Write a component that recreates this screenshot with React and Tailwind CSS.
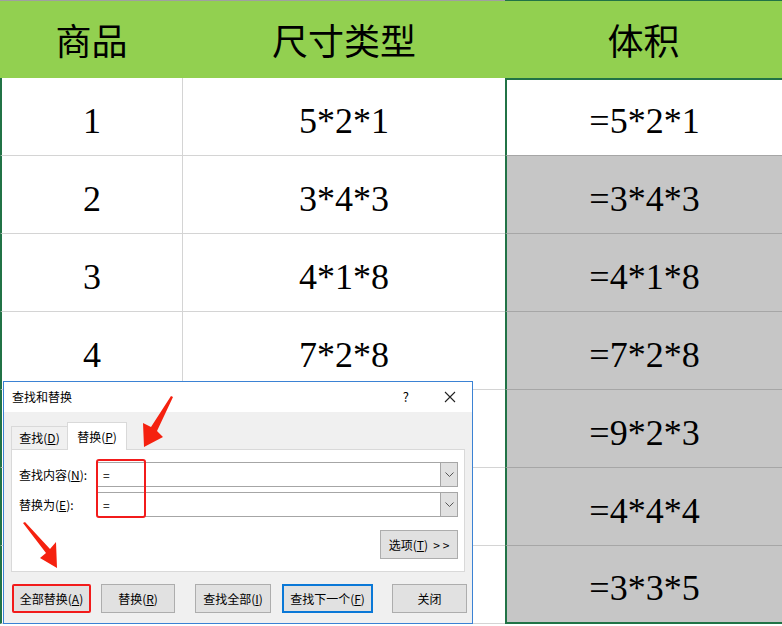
import React from 'react'

const rows = [
  ['1', '5*2*1', '=5*2*1'],
  ['2', '3*4*3', '=3*4*3'],
  ['3', '4*1*8', '=4*1*8'],
  ['4', '7*2*8', '=7*2*8'],
  ['5', '9*2*3', '=9*2*3'],
  ['6', '4*4*4', '=4*4*4'],
  ['7', '3*3*5', '=3*3*5'],
]

const serif = { fontFamily: '"Liberation Serif", "Noto Sans CJK SC", serif' }

const edge = {
  plain: 'border border-[#adadad]',
  red: 'border-2 border-[#f21b1b] rounded-[2px]',
  blue: 'border-2 border-[#0a78d7]',
}

function Btn({ children, className = '', tone = 'plain' }) {
  return (
    <div className={'h-[29px] flex items-center justify-center bg-[#e1e1e1] text-[12px] text-black whitespace-nowrap ' + edge[tone] + ' ' + className}>
      {children}
    </div>
  )
}

function Field({ label, mn, value }) {
  return (
    <div className="flex items-center h-[25px]">
      <div className="w-[78px] text-[12px] text-black">
        {label}(<u>{mn}</u>):
      </div>
      <div className="flex-1 h-[25px] flex border border-[#a6a6a6] bg-white">
        <div className="flex-1 pl-[5px] text-[12px] leading-[23px]">{value}</div>
        <div className="w-[17px] bg-[#e1e1e1] border-l border-[#a6a6a6] flex items-center justify-center">
          <svg width="9" height="5" viewBox="0 0 9 5">
            <path d="M0.5 0.5 L4.5 4.5 L8.5 0.5" fill="none" stroke="#555" strokeWidth="1" />
          </svg>
        </div>
      </div>
    </div>
  )
}

function Dialog() {
  return (
    <div
      className="absolute left-[3px] top-[381px] w-[470px] h-[243px] border border-[#3b82d4] bg-[#f0f0f0] flex flex-col"
      style={{ fontFamily: '"Noto Sans CJK SC", "Noto Sans", sans-serif' }}
    >
      <div className="h-[30px] bg-white flex items-center pl-[8px] text-[12px] text-black">
        <span className="flex-1">查找和替换</span>
        <span className="text-[13px] mr-[35px]">?</span>
        <svg width="12" height="12" viewBox="0 0 12 12" className="mr-[16px]">
          <path d="M1 1 L11 11 M11 1 L1 11" stroke="#222" strokeWidth="1.1" />
        </svg>
      </div>
      <div className="px-[7px] pt-[10px]">
        <div className="flex items-end h-[27px] text-[12px] text-black">
          <div className="w-[56px] h-[23px] border-l border-t border-[#d9d9d9] flex items-center justify-center">
            查找(<u>D</u>)
          </div>
          <div className="w-[60px] h-[28px] -mb-px bg-white border border-b-0 border-[#d9d9d9] flex items-center justify-center relative z-10">
            替换(<u>P</u>)
          </div>
        </div>
        <div className="h-[123px] bg-white border border-[#d9d9d9] pl-[7px] pr-[6px] pt-[12px] flex flex-col">
          <Field label="查找内容" mn="N" value="=" />
          <div className="h-[5px]" />
          <Field label="替换为" mn="E" value="=" />
          <div className="flex justify-end mt-[13px]">
            <Btn className="w-[78px] h-[28px]">
              选项(<u>T</u>)&nbsp;&nbsp;&gt; &gt;
            </Btn>
          </div>
        </div>
      </div>
      <div className="flex mt-[12px]">
        <Btn tone="red" className="ml-[8px] w-[79px]">全部替换(<u>A</u>)</Btn>
        <Btn className="ml-[10px] w-[74px]">替换(<u>R</u>)</Btn>
        <Btn className="ml-[20px] w-[76px]">查找全部(<u>I</u>)</Btn>
        <Btn tone="blue" className="ml-[11px] w-[91px]">查找下一个(<u>F</u>)</Btn>
        <Btn className="ml-[19px] w-[75px]">关闭</Btn>
      </div>
    </div>
  )
}

export default function App() {
  return (
    <div className="relative w-[782px] h-[626px] overflow-hidden bg-white text-black" style={serif}>
      <div className="flex h-[78px] bg-[#92d050] text-[36px]">
        <div className="w-[183px] border-t border-[#a0a0a0] flex items-center justify-center pt-[6px]">商品</div>
        <div className="w-[322px] border-t border-[#a0a0a0] flex items-center justify-center pt-[6px]">尺寸类型</div>
        <div className="flex-1 border-t border-[#217346] flex items-center justify-center pt-[6px]">体积</div>
      </div>
      {rows.map((r, i) => (
        <div key={i} className="flex h-[78px] text-[36px]">
          <div className="w-[183px] border-l-2 border-l-[#217346] border-r border-r-[#d4d4d4] border-b border-b-[#d4d4d4] flex items-center justify-center pt-[8px]">
            {r[0]}
          </div>
          <div className="w-[322px] border-b border-[#d4d4d4] flex items-center justify-center pt-[8px]">{r[1]}</div>
          {i === 0 ? (
            <div className="flex-1 bg-white border-l-2 border-t-2 border-[#217346] border-b border-b-[#a6a6a6] flex items-center justify-center pt-[6px]">
              {r[2]}
            </div>
          ) : (
            <div
              className={
                'flex-1 bg-[#c6c6c6] border-l-2 border-l-[#217346] flex items-center justify-center pt-[8px] ' +
                (i === rows.length - 1 ? 'border-b-2 border-b-[#217346]' : 'border-b border-b-[#a6a6a6]')
              }
            >
              {r[2]}
            </div>
          )}
        </div>
      ))}
      <Dialog />
      <svg className="absolute left-0 top-0 pointer-events-none" width="782" height="626" viewBox="0 0 782 626">
        <rect x="97" y="460" width="48" height="57" rx="2" fill="none" stroke="#f21b1b" strokeWidth="2" />
        <polygon points="144,447 143,423 151,427 171,396 173,397 157,431 163,437" fill="#f5210f" />
        <polygon points="57,568 40,558 46,553 23,523 25,522 50,549 56,542" fill="#f5210f" />
      </svg>
    </div>
  )
}
